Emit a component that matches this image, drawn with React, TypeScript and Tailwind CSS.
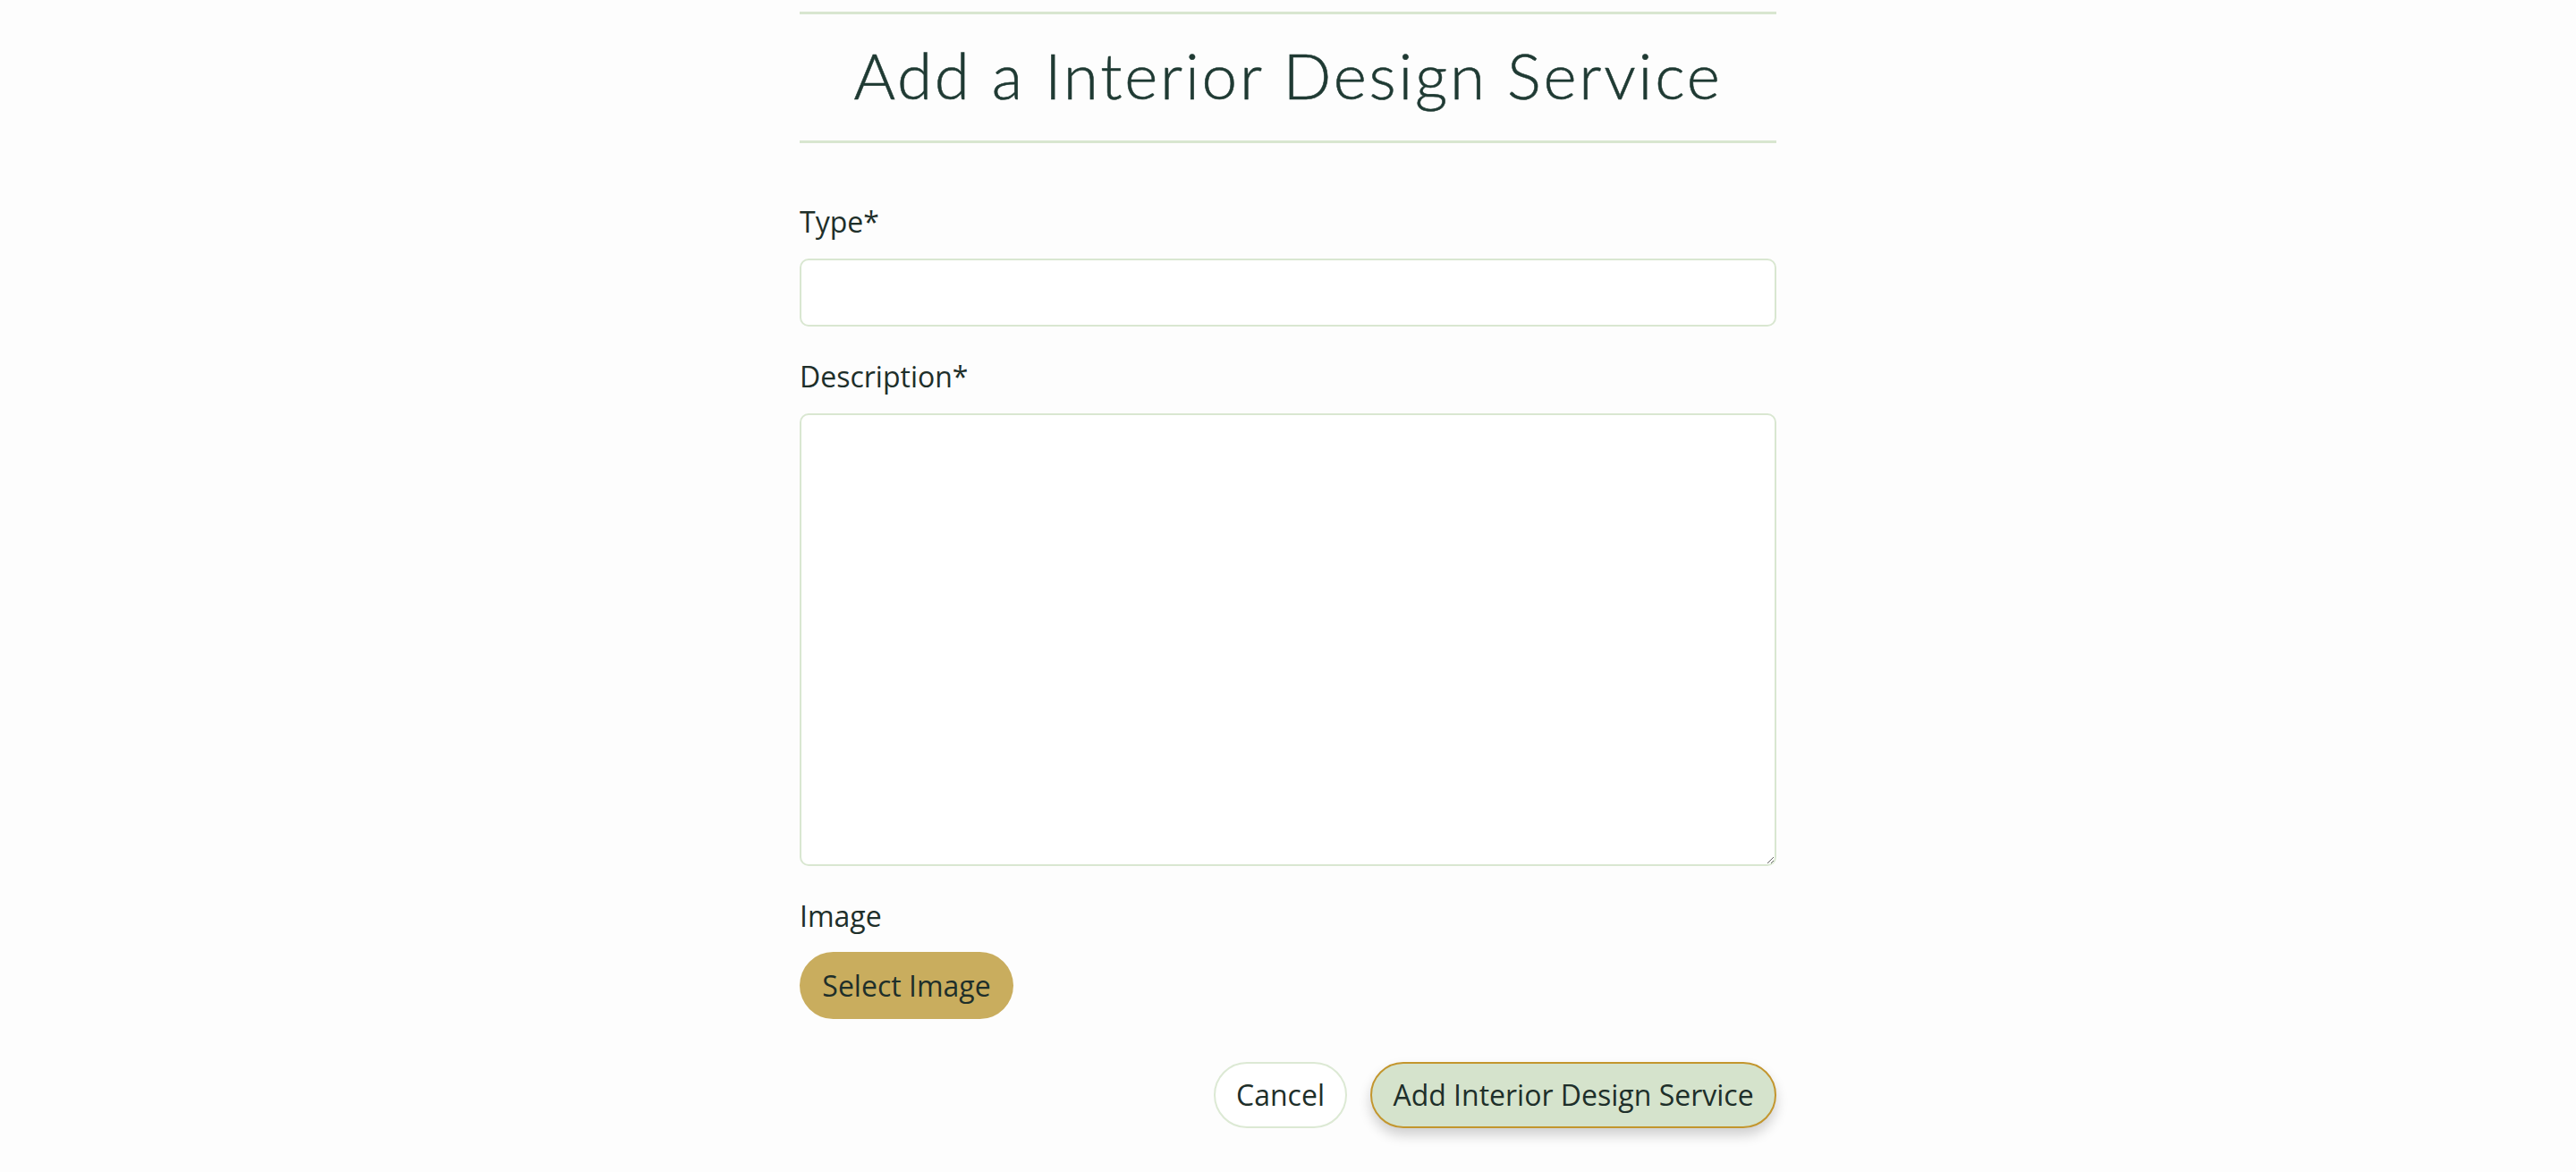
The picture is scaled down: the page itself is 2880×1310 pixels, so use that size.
import React from "react";

export default function App() {
  return (
    <div className="min-h-[1310px] w-full bg-[#fdfdfd] pt-[13px]" style={{ fontFamily: '"Open Sans", "Noto Sans", sans-serif' }}>
      <div className="mx-auto w-[1092px] text-[#1e2f2a]">
        <div className="flex h-[147px] items-center justify-center border-y-[3px] border-[#d8e6d0]">
          <h1
            className="text-[71px] font-light tracking-[2.8px] text-[#1f3a33] leading-none pb-[6px]"
            style={{ fontFamily: 'Lato, "Noto Sans", sans-serif', WebkitTextStroke: "0.6px #1f3a33" }}
          >
            Add a Interior Design Service
          </h1>
        </div>

        <form className="mt-[64px] flex flex-col">
          <label className="mb-[17px] text-[32px] leading-[48px]">Type*</label>
          <input
            type="text"
            className="h-[76px] w-full rounded-[10px] border-2 border-[#d9e7d1] bg-white px-4 text-[32px] outline-none"
          />

          <label className="mt-[32px] mb-[17px] text-[32px] leading-[48px]">Description*</label>
          <textarea className="h-[506px] w-full resize-y rounded-[10px] border-2 border-[#d9e7d1] bg-white px-4 py-2 text-[32px] outline-none" />

          <label className="mt-[32px] mb-[16px] text-[32px] leading-[48px]">Image</label>
          <div>
            <button
              type="button"
              className="h-[75px] w-[239px] rounded-full bg-[#c9ad5e] text-[32px] text-[#1e2f2a]"
            >
              Select Image
            </button>
          </div>

          <div className="mt-[48px] flex justify-end gap-[26px]">
            <button
              type="button"
              className="h-[74px] w-[149px] rounded-[37px] border-2 border-[#dce9d4] bg-white text-[32px] text-[#1e2f2a]"
            >
              Cancel
            </button>
            <button
              type="button"
              className="h-[74px] w-[454px] rounded-[37px] border-2 border-[#c3962e] bg-[#d5e3cc] text-[32px] text-[#1e2f2a] shadow-[0_8px_14px_rgba(0,0,0,0.18)]"
            >
              Add Interior Design Service
            </button>
          </div>
        </form>
      </div>
    </div>
  );
}
